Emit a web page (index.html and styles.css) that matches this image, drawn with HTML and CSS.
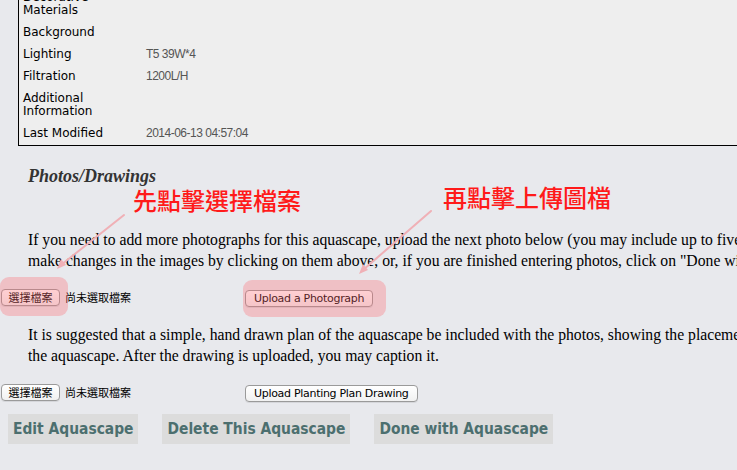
FILE: index.html
```html
<!DOCTYPE html>
<html lang="zh-Hant">
<head>
<meta charset="utf-8">
<title>Aquascape</title>
<link rel="stylesheet" href="styles.css">
</head>
<body>
<div class="page">
  <div class="details">
    <table class="specs">
      <tr><td class="lbl">Decorative<br>Materials</td><td class="val"></td></tr>
      <tr><td class="lbl">Background</td><td class="val"></td></tr>
      <tr><td class="lbl">Lighting</td><td class="val">T5 39W*4</td></tr>
      <tr><td class="lbl">Filtration</td><td class="val">1200L/H</td></tr>
      <tr><td class="lbl">Additional<br>Information</td><td class="val"></td></tr>
      <tr><td class="lbl">Last Modified</td><td class="val">2014-06-13 04:57:04</td></tr>
    </table>
  </div>

  <h2 class="heading">Photos/Drawings</h2>
  <p class="text">If you need to add more photographs for this aquascape, upload the next photo below (you may include up to five photos). You may<br>make changes in the images by clicking on them above, or, if you are finished entering photos, click on "Done with Aquascape".</p>

  <div class="upload-row">
    <div class="file-cell">
      <span class="btn cjk">選擇檔案</span><span class="nofile">尚未選取檔案</span>
    </div>
    <div class="submit-cell"><span class="btn">Upload a Photograph</span></div>
  </div>

  <p class="text second">It is suggested that a simple, hand drawn plan of the aquascape be included with the photos, showing the placement of the plants in<br>the aquascape. After the drawing is uploaded, you may caption it.</p>

  <div class="upload-row">
    <div class="file-cell">
      <span class="btn cjk">選擇檔案</span><span class="nofile">尚未選取檔案</span>
    </div>
    <div class="submit-cell"><span class="btn">Upload Planting Plan Drawing</span></div>
  </div>

  <div class="actions">
    <span class="action">Edit Aquascape</span>
    <span class="action">Delete This Aquascape</span>
    <span class="action">Done with Aquascape</span>
  </div>
</div>

<div class="hl hl-file"></div>
<div class="hl hl-upload"></div>
<div class="note note-1">先點擊選擇檔案</div>
<div class="note note-2">再點擊上傳圖檔</div>
<svg class="arrows" width="737" height="470" viewBox="0 0 737 470" aria-hidden="true">
  <g stroke="#f0b0b6" stroke-width="2" fill="none" stroke-linecap="round">
    <line x1="124" y1="215" x2="61" y2="265"/>
    <line x1="431" y1="211" x2="363" y2="270"/>
  </g>
  <g fill="#f0b0b6">
    <polygon points="57,269 61,259 66,265"/>
    <polygon points="359,274 363,264 368,270"/>
  </g>
</svg>
</body>
</html>
```
FILE: styles.css
```css
html, body {
  margin: 0;
  padding: 0;
}
body {
  background: #e8e9ed;
  overflow: hidden;
  width: 737px;
  height: 470px;
  position: relative;
}
.page {
  margin-top: -13px;
  width: 1200px;
}
.details {
  margin-left: 18px;
  border-left: 1px solid #000;
  border-bottom: 1px solid #000;
  background: #eeeeee;
  padding: 0 0 0 4px;
}
.specs {
  border-collapse: collapse;
}
.specs td {
  padding: 4px 0 5px 0;
  line-height: 13px;
  vertical-align: middle;
}
.lbl {
  width: 123px;
  font-family: "DejaVu Sans", Verdana, sans-serif;
  font-size: 12px;
  color: #000;
}
.val {
  font-family: "Liberation Sans", Arial, sans-serif;
  font-size: 12px;
  letter-spacing: -0.5px;
  color: #555;
}
.heading {
  margin: 20px 0 0 28px;
  font-family: "Liberation Serif", "Times New Roman", serif;
  font-style: italic;
  font-weight: bold;
  font-size: 18px;
  line-height: 21px;
  color: #333;
}
.text {
  margin: 42px 0 0 28px;
  font-family: "Liberation Serif", "Times New Roman", serif;
  font-size: 15.7px;
  line-height: 21px;
  color: #000;
  white-space: nowrap;
}
.text.second {
  margin-top: 18px;
}
.upload-row {
  display: flex;
  align-items: center;
  margin-top: 17px;
  height: 18px;
}
.file-cell {
  width: 244px;
  padding-left: 1px;
  display: flex;
  align-items: center;
}
.btn {
  display: inline-block;
  box-sizing: border-box;
  height: 17px;
  line-height: 15px;
  padding: 0 8px;
  border: 1px solid #9a9a9a;
  border-radius: 4px;
  background: linear-gradient(#ffffff, #f1f1f1);
  font-family: "DejaVu Sans", sans-serif;
  font-size: 11px;
  letter-spacing: -0.3px;
  color: #000;
  box-shadow: 0 1px 0 rgba(0,0,0,0.08);
}
.btn.cjk {
  font-family: "Noto Sans CJK TC", sans-serif;
  letter-spacing: 0;
  padding: 0 6px;
  width: 59px;
  text-align: center;
}
.nofile {
  margin-left: 5px;
  font-family: "Noto Sans CJK TC", sans-serif;
  font-size: 11px;
  color: #000;
}
.actions {
  display: flex;
  gap: 24px;
  margin: 13px 0 0 8px;
}
.action {
  display: inline-block;
  height: 30px;
  line-height: 30px;
  padding: 0 5px;
  background: #dcdcdc;
  font-family: "DejaVu Sans Condensed", "DejaVu Sans", sans-serif;
  font-stretch: condensed;
  font-weight: bold;
  font-size: 15.4px;
  color: #4c6f6f;
}
.hl {
  position: absolute;
  background: rgba(255, 100, 110, 0.31);
  border-radius: 9px;
}
.hl-file {
  left: 0;
  top: 277px;
  width: 68px;
  height: 39px;
}
.hl-upload {
  left: 243px;
  top: 280px;
  width: 143px;
  height: 37px;
}
.note {
  position: absolute;
  font-family: "Noto Sans CJK TC", sans-serif;
  font-size: 24px;
  line-height: 28px;
  color: #ff1a1a;
  font-weight: 500;
  white-space: nowrap;
}
.note-1 {
  left: 133px;
  top: 186px;
}
.note-2 {
  left: 443px;
  top: 183px;
}
.arrows {
  position: absolute;
  left: 0;
  top: 0;
  pointer-events: none;
}
```
